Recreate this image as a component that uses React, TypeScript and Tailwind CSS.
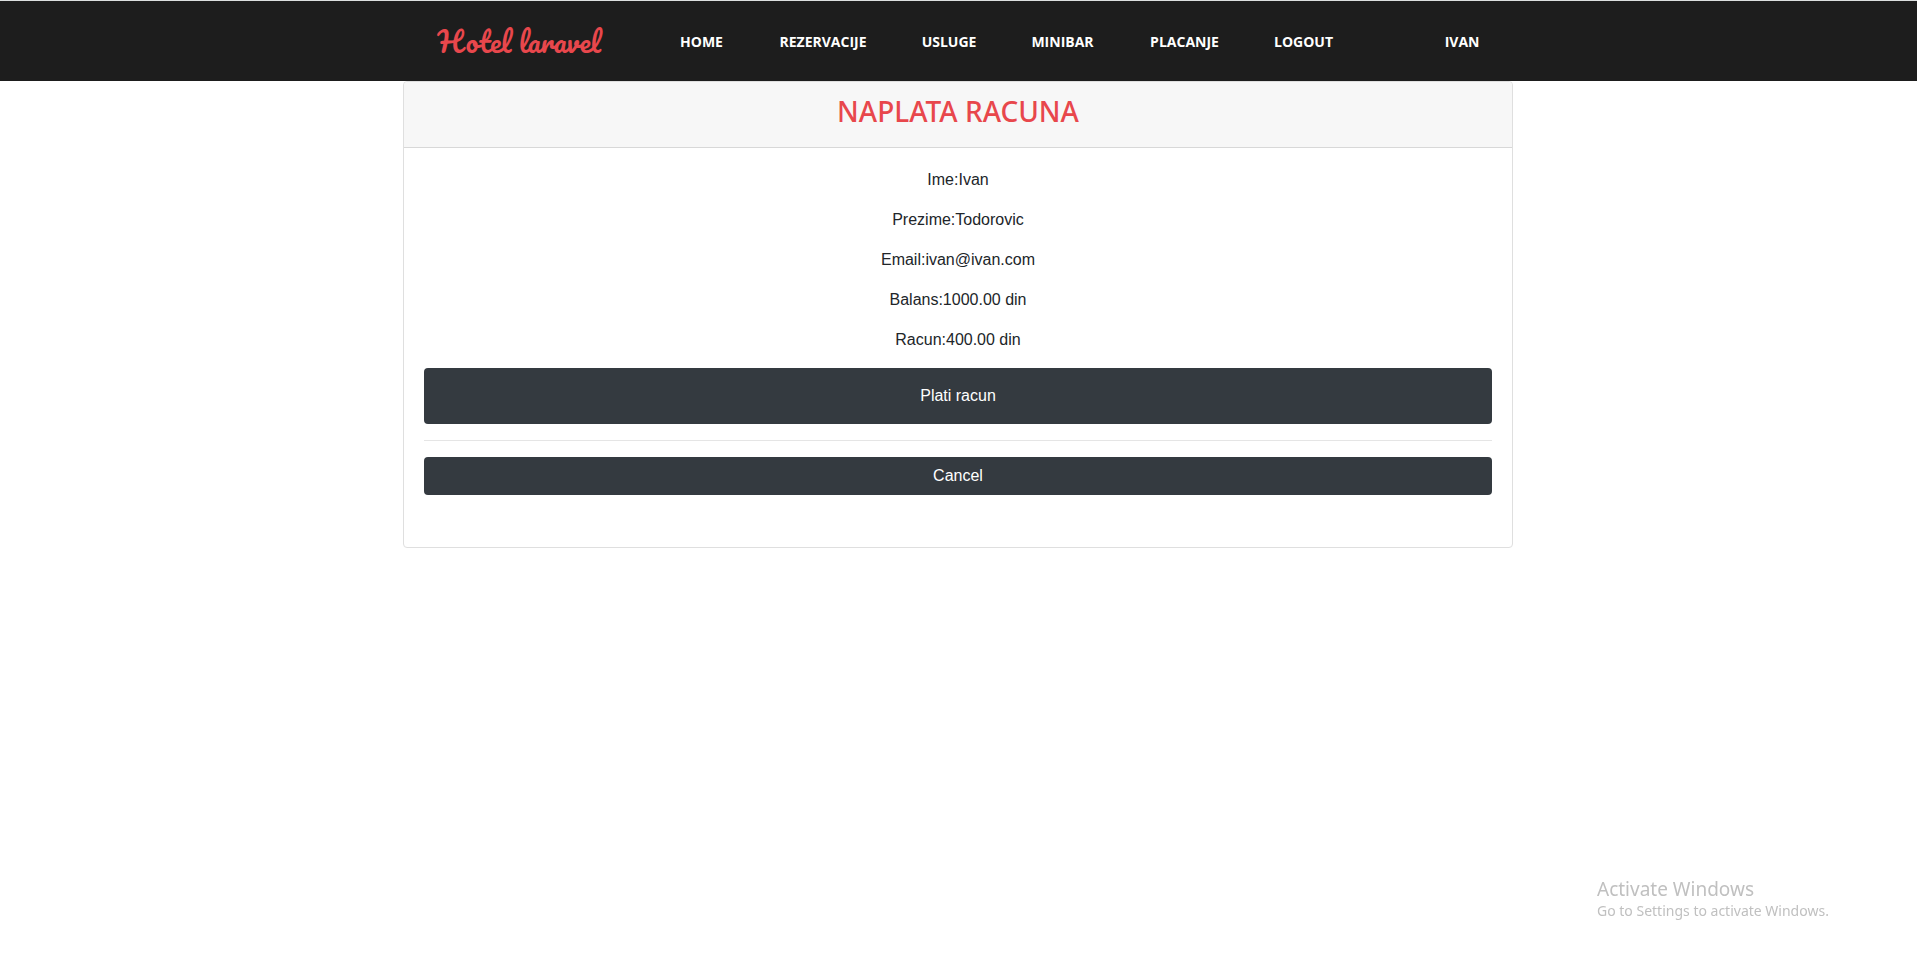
const links = [
  { label: "Home", width: "w-[42px]" },
  { label: "Rezervacije", width: "w-[85px]" },
  { label: "Usluge", width: "w-[51px]" },
  { label: "Minibar", width: "w-[60px]" },
  { label: "Placanje", width: "w-[68px]" },
  { label: "Logout", width: "w-[54px]" },
];

const details = [
  "Ime:Ivan",
  "Prezime:Todorovic",
  "Email:ivan@ivan.com",
  "Balans:1000.00 din",
  "Racun:400.00 din",
];

function Navbar() {
  return (
    <header className="border-t border-[#dcdfdf] bg-[#1d1d1d]">
      <div className="mx-auto flex h-20 max-w-[1110px] items-center pt-0.5 pr-[34px] pl-[34px]">
        <a
          href="#"
          className="w-[243px] font-['Pacifico',cursive] text-[28px] leading-9 whitespace-nowrap text-[#e8474c]"
        >
          Hotel laravel
        </a>
        <nav className="flex grow items-center justify-between font-['Open_Sans',sans-serif] text-sm leading-5 font-bold text-white uppercase">
          <ul className="flex items-center gap-[58px]">
            {links.map((link) => (
              <li key={link.label} className={`${link.width} flex shrink-0 justify-center`}>
                <a href="#">{link.label}</a>
              </li>
            ))}
          </ul>
          <a href="#">Ivan</a>
        </nav>
      </div>
    </header>
  );
}

function InvoiceCard() {
  return (
    <section className="mx-auto max-w-[1110px] rounded border border-[#dfdfdf] bg-white text-center font-['Liberation_Sans',sans-serif] text-base text-[#212529]">
      <div className="rounded-t border-b border-[#d8d8d8] bg-[#f7f7f7] px-5 pt-[13px] pb-[19px]">
        <h3 className="font-['Noto_Sans',sans-serif] text-[28px] leading-[33px] font-medium text-[#e8474c]">
          NAPLATA RACUNA
        </h3>
      </div>
      <div className="px-5 pt-5 pb-[52px]">
        {details.map((line) => (
          <p key={line} className="mb-4">
            {line}
          </p>
        ))}
        <button type="button" className="block h-14 w-full rounded bg-[#343a40] text-white">
          Plati racun
        </button>
        <hr className="my-4 border-[#e5e5e5]" />
        <button type="button" className="block w-full rounded bg-[#343a40] py-[7px] text-white">
          Cancel
        </button>
      </div>
    </section>
  );
}

export default function App() {
  return (
    <div className="min-h-screen bg-white">
      <Navbar />
      <main className="pr-px">
        <InvoiceCard />
      </main>
      <aside className="fixed right-[84px] bottom-12 w-[236px] font-['Noto_Sans',sans-serif] text-[#c0c0c0]">
        <p className="text-[19px] leading-6">Activate Windows</p>
        <p className="text-sm leading-5">Go to Settings to activate Windows.</p>
      </aside>
    </div>
  );
}
